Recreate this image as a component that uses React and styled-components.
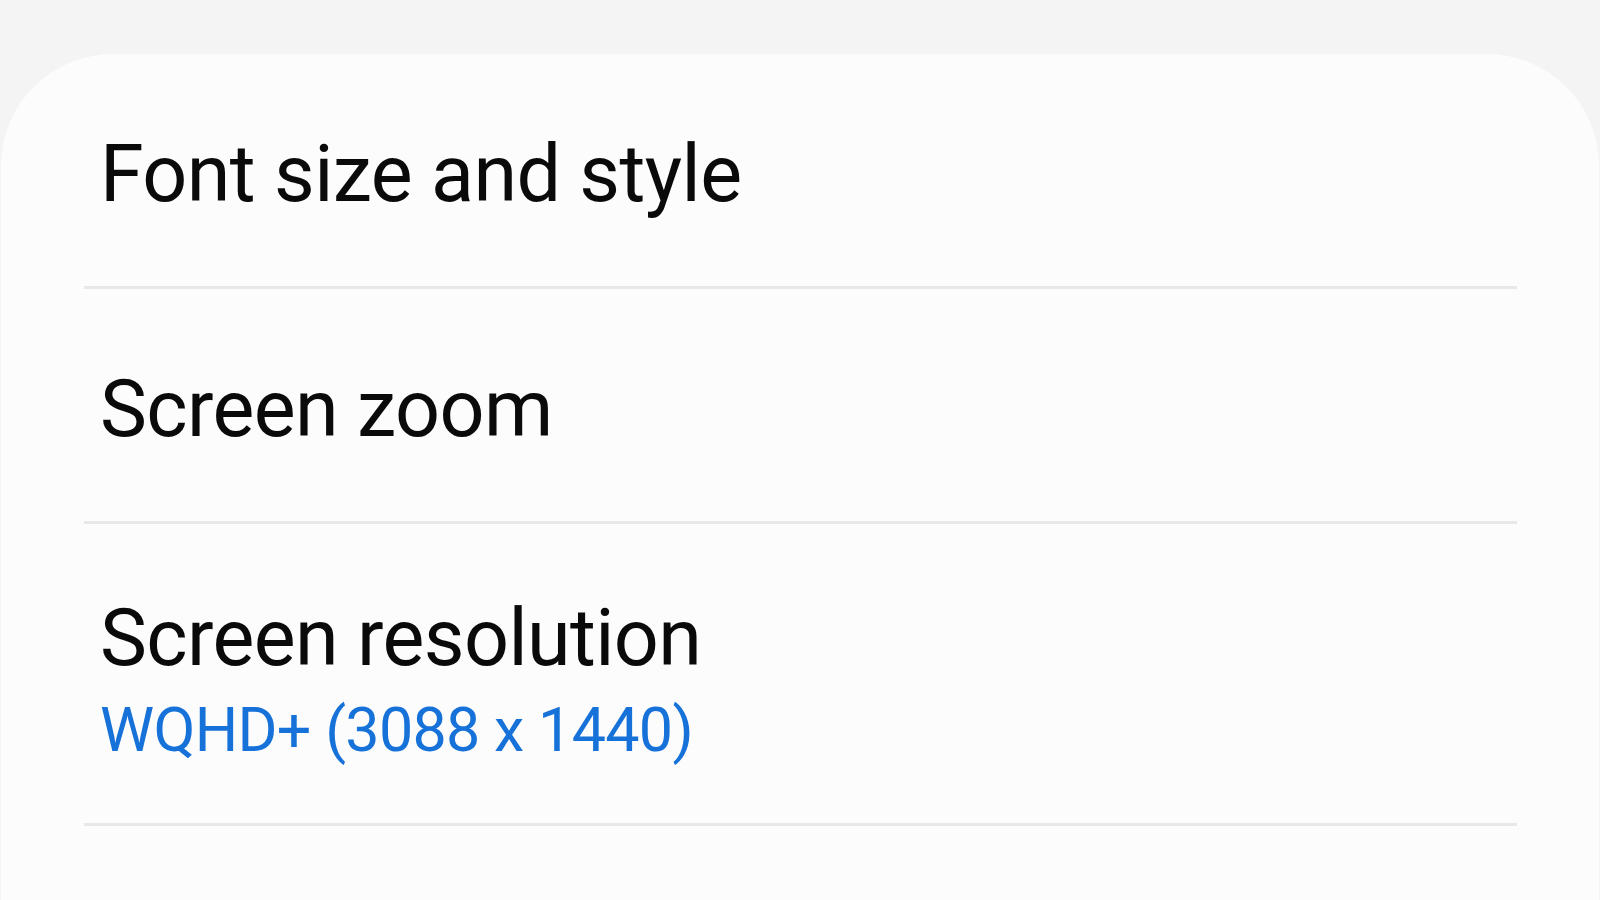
import React from 'react'
import styled, { createGlobalStyle } from 'styled-components'

const ITEMS = [
  { title: 'Font size and style' },
  { title: 'Screen zoom' },
  { title: 'Screen resolution', summary: 'WQHD+ (3088 x 1440)' },
]

export default function App() {
  return (
    <>
      <GlobalStyle />
      <Screen>
        <Card>
          {ITEMS.map(({ title, summary }, i) => (
            <Item key={i} hasSummary={!!summary}>
              <Title>{title}</Title>
              {summary && <Summary>{summary}</Summary>}
            </Item>
          ))}
        </Card>
      </Screen>
    </>
  )
}

const GlobalStyle = createGlobalStyle`
  html, body {
    margin: 0;
    padding: 0;
    background-color: #f4f4f4;
    font-family: Roboto, "Noto Sans", sans-serif;
    overflow: hidden;
  }
`

const Screen = styled.div`
  width: 1600px;
  height: 900px;
  padding-top: 54px;
  box-sizing: border-box;
  background-color: #f4f4f4;
`

const Card = styled.div`
  display: flex;
  flex-direction: column;
  height: 100%;
  margin: 0 1px;
  padding: 0 82px 0 83px;
  background-color: #fcfcfc;
  border-radius: 112px 112px 0 0;
`

const Item = styled.div`
  display: flex;
  flex-direction: column;
  padding: ${(props) => (props.hasSummary ? '68px 0 57px' : '74px 0 66px')};
  padding-left: 16px;
  border-bottom: 3px solid #e8e8e8;
  gap: 10px;
`

const Title = styled.div`
  font-size: 79px;
  letter-spacing: -0.6px;
  color: #0a0a0a;
  line-height: normal;
`

const Summary = styled.div`
  font-size: 61px;
  letter-spacing: -0.7px;
  color: #1672d9;
  line-height: normal;
`
